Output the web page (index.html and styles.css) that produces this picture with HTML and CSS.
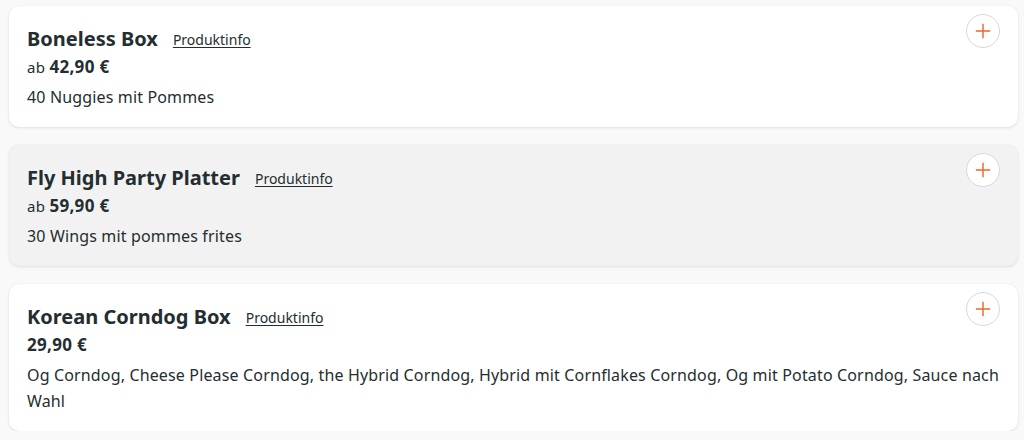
FILE: index.html
```html
<!DOCTYPE html>
<html lang="de">
<head>
<meta charset="utf-8">
<link rel="stylesheet" href="styles.css">
</head>
<body>
<div class="list">
  <div class="card">
    <div class="head"><h3 class="name">Boneless Box</h3><a class="more" href="#">Produktinfo</a></div>
    <button class="add" aria-label="Hinzufügen"><svg viewBox="0 0 20 20" width="18" height="18"><path d="M10 2v16M2 10h16" stroke="#e9692c" stroke-width="1.6" fill="none"/></svg></button>
    <div class="price"><span class="from">ab</span> <b>42,90 €</b></div>
    <p class="desc">40 Nuggies mit Pommes</p>
  </div>
  <div class="card hover">
    <div class="head"><h3 class="name">Fly High Party Platter</h3><a class="more" href="#">Produktinfo</a></div>
    <button class="add" aria-label="Hinzufügen"><svg viewBox="0 0 20 20" width="18" height="18"><path d="M10 2v16M2 10h16" stroke="#e9692c" stroke-width="1.6" fill="none"/></svg></button>
    <div class="price"><span class="from">ab</span> <b>59,90 €</b></div>
    <p class="desc">30 Wings mit pommes frites</p>
  </div>
  <div class="card">
    <div class="head"><h3 class="name">Korean Corndog Box</h3><a class="more" href="#">Produktinfo</a></div>
    <button class="add" aria-label="Hinzufügen"><svg viewBox="0 0 20 20" width="18" height="18"><path d="M10 2v16M2 10h16" stroke="#e9692c" stroke-width="1.6" fill="none"/></svg></button>
    <div class="price"><b>29,90 €</b></div>
    <p class="desc">Og Corndog, Cheese Please Corndog, the Hybrid Corndog, Hybrid mit Cornflakes Corndog, Og mit Potato Corndog, Sauce nach Wahl</p>
  </div>
</div>
</body>
</html>
```
FILE: styles.css
```css
* { box-sizing: border-box; }
html, body { margin: 0; background: #f9f9f9; }
body {
  font-family: "Noto Sans", "Open Sans", sans-serif;
  color: #242e30;
}
.list {
  display: flex;
  flex-direction: column;
  gap: 18px;
  padding: 6px 6px 0 9px;
}
.card {
  display: grid;
  grid-template-columns: 1fr auto;
  column-gap: 12px;
  background: #fff;
  border-radius: 10px;
  padding: 18px 18px 17px 18px;
  box-shadow: 0 1px 3px rgba(0,0,0,0.10), 0 0 1px rgba(0,0,0,0.08);
}
.card.hover { background: #f2f2f2; }
.head { grid-column: 1; grid-row: 1; display: flex; gap: 15px; height: 30px; align-items: center; }
.name { margin: 0; font-size: 20px; font-weight: 700; letter-spacing: 0; line-height: 30px; }
.more { color: #242e30; font-size: 14px; text-decoration: underline; text-underline-offset: 2px; }
.price { grid-column: 1; grid-row: 2; line-height: 24px; font-size: 16px; margin-top: 1px; }
.price .from { font-size: 15px; letter-spacing: 0.3px; }
.price b { font-weight: 700; font-size: 17px; letter-spacing: 0.3px; }
.desc { grid-column: 1 / -1; grid-row: 3; margin: 5px 0 0; font-size: 16px; line-height: 26px; letter-spacing: 0.15px; }
.add {
  grid-column: 2;
  grid-row: 1 / 3;
  align-self: start;
  margin-top: -10px;
  width: 34px; height: 34px;
  border-radius: 50%;
  border: 1px solid #d8d8d8;
  background: #fff;
  display: flex; align-items: center; justify-content: center;
  padding: 0;
}
```
